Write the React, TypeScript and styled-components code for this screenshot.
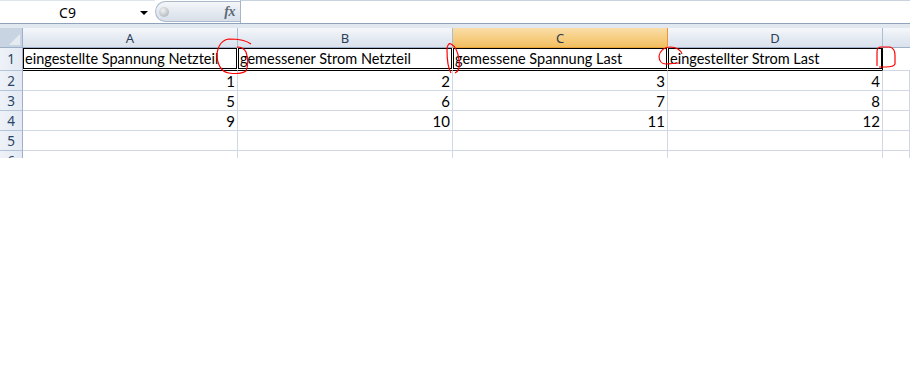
import React from "react";
import styled, { createGlobalStyle, css } from "styled-components";

const GlobalStyle = createGlobalStyle`
  html, body { margin: 0; padding: 0; background: #ffffff; }
  body { font-family: "Noto Sans", "Liberation Sans", sans-serif; }
  * { box-sizing: border-box; }
`;

const Page = styled.div`
  position: relative;
  width: 910px;
  height: 384px;
  overflow: hidden;
  background: #ffffff;
`;

const FormulaBar = styled.div`
  display: flex;
  height: 24px;
  border-bottom: 1px solid #8fa3bd;
  background: #ffffff;
`;

const NameBox = styled.div`
  position: relative;
  width: 155px;
  display: flex;
  align-items: center;
  justify-content: center;
  padding-right: 20px;
  font-family: "Noto Sans", "Liberation Sans", sans-serif;
  font-size: 14px;
  color: #000;
  border-top: 1px solid #dfe5ec;
`;

const DropArrow = styled.span`
  position: absolute;
  right: 7px;
  top: 10px;
  width: 0;
  height: 0;
  border-left: 4px solid transparent;
  border-right: 4px solid transparent;
  border-top: 4px solid #000;
`;

const FxPill = styled.div`
  width: 85px;
  margin: 1px 0 0 0;
  height: 21px;
  display: flex;
  align-items: center;
  justify-content: space-between;
  padding: 0 5px 0 3px;
  border: 1px solid #a9b9cc;
  border-right: none;
  border-radius: 11px 0 0 11px;
  background: linear-gradient(#f4f6f9, #e4e9f0 55%, #d9e0ea);
`;

const Knob = styled.span`
  width: 10px;
  height: 10px;
  border-radius: 50%;
  background: radial-gradient(circle at 40% 35%, #f2f2f2, #b9bec5 70%, #a3a9b1);
`;

const Fx = styled.span`
  font-family: "Liberation Serif", serif;
  font-style: italic;
  font-weight: bold;
  font-size: 14px;
  color: #5d6977;
  letter-spacing: -0.5px;
`;

const FormulaInput = styled.div`
  flex: 1;
  border-left: 1px solid #a5b6cb;
  border-top: 1px solid #c9d3df;
  background: #ffffff;
`;

const Band = styled.div`
  height: 4px;
  background: #e2e8f0;
`;

const Sheet = styled.div`
  height: 130px;
  overflow: hidden;
  display: flex;
  flex-direction: column;
`;

const Row = styled.div`
  display: flex;
  flex: none;
`;

const Corner = styled.div`
  position: relative;
  width: 23px;
  height: 20px;
  border-right: 1px solid #9eb1c8;
  border-bottom: 1px solid #9eb1c8;
  background: #c9d4e3;
  &::after {
    content: "";
    position: absolute;
    right: 2px;
    bottom: 2px;
    width: 0;
    height: 0;
    border-left: 11px solid transparent;
    border-bottom: 11px solid #e6ebf2;
  }
`;

const ColHead = styled.div<{ $selected?: boolean; $w: number }>`
  width: ${(p) => p.$w}px;
  flex: none;
  height: 20px;
  display: flex;
  align-items: center;
  justify-content: center;
  font-family: "Noto Sans", "Liberation Sans", sans-serif;
  font-size: 13px;
  color: #2a3f57;
  border-right: 1px solid #a9bdd3;
  border-bottom: 1px solid #9eb1c8;
  background: linear-gradient(#f5f7fa, #e3e9f1 60%, #dbe2ec);
  ${(p) =>
    p.$selected &&
    css`
      background: linear-gradient(#f9dda8, #f6cd80 55%, #f2c062);
      border-right-color: #f29536;
      border-bottom-color: #e9a43a;
      color: #2c3a48;
    `}
`;

const FillHead = styled(ColHead)`
  flex: 1;
  border-right: none;
`;

const RowHead = styled.div<{ $h: number }>`
  width: 23px;
  height: ${(p) => p.$h}px;
  flex: none;
  display: flex;
  align-items: center;
  justify-content: center;
  font-family: "Noto Sans", "Liberation Sans", sans-serif;
  font-size: 13.5px;
  color: #2a4466;
  border-right: 1px solid #9eb1c8;
  border-bottom: 1px solid #b3c4d8;
  background: linear-gradient(to right, #eef2f8, #e3eaf3);
`;

const Cell = styled.div<{ $w?: number; $h: number }>`
  width: ${(p) => (p.$w ? `${p.$w}px` : "auto")};
  flex: ${(p) => (p.$w ? "none" : "1")};
  height: ${(p) => p.$h}px;
  display: flex;
  align-items: center;
  justify-content: flex-end;
  padding-right: 2px;
  font-family: "Lato", "Liberation Sans", sans-serif;
  font-size: 15px;
  color: #000;
  border-right: 1px solid #d0d7e5;
  border-bottom: 1px solid #d0d7e5;
  background: #fff;
`;

const TitleCell = styled.div<{ $w?: number }>`
  width: ${(p) => (p.$w ? `${p.$w}px` : "auto")};
  flex: ${(p) => (p.$w ? "none" : "1")};
  height: 23px;
  padding-bottom: 1px;
  border-right: 1px solid #ffffff;
  border-bottom: 1px solid #000;
  background: #fff;
`;

const TitleBox = styled.div`
  height: 21px;
  border: 1px solid #000;
  display: flex;
  align-items: center;
  padding-left: 1px;
  font-family: "Lato", "Liberation Sans", sans-serif;
  font-size: 14.5px;
  color: #000;
  white-space: nowrap;
  overflow: hidden;
`;

const TailCell = styled.div`
  flex: 1;
  height: 23px;
  border-left: 1px solid #000;
  border-bottom: 1px solid #d0d7e5;
  margin-left: -1px;
  background: #fff;
`;

const Marks = styled.svg`
  position: absolute;
  left: 0;
  top: 0;
  pointer-events: none;
`;

const COLW = 215;
const cols = ["A", "B", "C", "D"];
const titles = [
  "eingestellte Spannung Netzteil",
  "gemessener Strom Netzteil",
  "gemessene Spannung Last",
  "eingestellter Strom Last",
];
const data = [
  [1, 2, 3, 4],
  [5, 6, 7, 8],
  [9, 10, 11, 12],
  [null, null, null, null],
  [null, null, null, null],
];

export default function App() {
  return (
    <Page>
      <GlobalStyle />
      <FormulaBar>
        <NameBox>
          C9
          <DropArrow />
        </NameBox>
        <FxPill>
          <Knob />
          <Fx>fx</Fx>
        </FxPill>
        <FormulaInput />
      </FormulaBar>
      <Band />
      <Sheet>
        <Row>
          <Corner />
          {cols.map((c) => (
            <ColHead key={c} $w={COLW} $selected={c === "C"}>
              {c}
            </ColHead>
          ))}
          <FillHead $w={0} />
        </Row>
        <Row>
          <RowHead $h={23}>1</RowHead>
          {titles.map((t) => (
            <TitleCell key={t} $w={COLW}>
              <TitleBox>{t}</TitleBox>
            </TitleCell>
          ))}
          <TailCell />
        </Row>
        {data.map((r, i) => (
          <Row key={i}>
            <RowHead $h={20}>{i + 2}</RowHead>
            {r.map((v, j) => (
              <Cell key={j} $w={COLW} $h={20}>
                {v ?? ""}
              </Cell>
            ))}
            <Cell $h={20} />
          </Row>
        ))}
      </Sheet>
      <Marks width="910" height="384" viewBox="0 0 910 384" fill="none" stroke="#ff0000" strokeWidth="1.2">
        <path d="M251,44 C246,40 238,39 229,39 C222,40 218,46 217,54 C217,64 221,72 229,73 C236,74 243,73 246,71 C248,66 248,58 246,52 C244,48 241,47 237,47" />
        <path d="M451,73 C448,68 447,58 447,50 C447,45 449,43 451,44 C455,46 458,52 459,60 C460,66 459,71 455,73" />
        <path d="M682,54 C681,50 676,47 670,47 C664,47 660,51 659,56 C659,61 662,64 666,64 C670,64 675,63 679,63" />
        <path d="M877,66 L877,52 C877,49 878,47 881,47 L890,47 C893,48 895,51 895,55 L895,64 C894,66 890,67 886,67 L879,67" />
      </Marks>
    </Page>
  );
}
